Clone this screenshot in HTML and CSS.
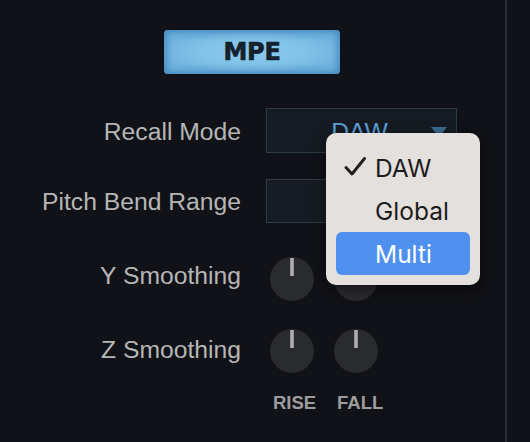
FILE: index.html
```html
<!DOCTYPE html>
<html>
<head>
<meta charset="utf-8">
<link rel="stylesheet" href="styles.css">
</head>
<body>
<div class="panel">
  <div class="content">
    <div class="mpe">MPE</div>
    <div class="row row-recall">
      <div class="label label-recall">Recall Mode</div>
      <div class="select select-recall">
        <span class="select-value">DAW</span>
        <span class="caret"></span>
      </div>
    </div>
    <div class="row row-pitch">
      <div class="label label-pitch">Pitch Bend Range</div>
      <div class="select select-pitch"></div>
    </div>
    <div class="row row-y">
      <div class="label label-y">Y Smoothing</div>
      <div class="knobs"><div class="knob"></div><div class="knob"></div></div>
    </div>
    <div class="row row-z">
      <div class="label label-z">Z Smoothing</div>
      <div class="knobs"><div class="knob"></div><div class="knob"></div></div>
    </div>
    <div class="knob-labels"><span>RISE</span><span>FALL</span></div>
  </div>
  <div class="divider"></div>
  <div class="menu">
    <div class="menu-item">
      <svg class="check" width="24" height="20" viewBox="0 0 24 20"><polyline points="2,10.5 8,17 20.5,1.5" fill="none" stroke="#1e1e1e" stroke-width="2.9" stroke-linecap="round" stroke-linejoin="round"/></svg>
      <span>DAW</span>
    </div>
    <div class="menu-item"><span>Global</span></div>
    <div class="menu-item menu-item-active"><span>Multi</span></div>
  </div>
</div>
</body>
</html>
```

FILE: styles.css
```css
html, body {
  margin: 0;
  padding: 0;
}
body {
  background: #111217;
  width: 530px;
  height: 442px;
  overflow: hidden;
  font-family: "Liberation Sans", Arial, sans-serif;
}
.panel {
  position: relative;
  display: flex;
  height: 442px;
}
.content {
  width: 505px;
  padding-top: 30px;
  box-sizing: border-box;
}
.divider {
  width: 2px;
  height: 442px;
  background: #2a2c33;
}
.mpe {
  margin-left: 164px;
  width: 176px;
  height: 44px;
  border-radius: 4px;
  background: radial-gradient(ellipse farthest-side at 50% 50%, #8ccaec 0%, #82c2e8 60%, #73b5e0 100%);
  box-shadow: inset 0 0 9px 2px #3f86bb;
  display: flex;
  align-items: center;
  justify-content: center;
  font-family: "DejaVu Sans", sans-serif;
  font-weight: bold;
  font-size: 24px;
  letter-spacing: -0.3px;
  color: #13222c;
  -webkit-text-stroke: 0.6px #13222c;
}
.row {
  display: grid;
  grid-template-columns: 241px auto;
  column-gap: 25px;
  align-items: center;
}
.row-recall { margin-top: 34px; height: 45px; }
.row-pitch { margin-top: 26px; height: 44px; }
.row-y { margin-top: 34px; height: 44px; }
.row-z { margin-top: 28px; height: 44px; }
.label {
  text-align: right;
  font-size: 24.7px;
  line-height: 25px;
  color: #b6b6b6;
  white-space: nowrap;
}
.label-recall { padding-top: 2px; }
.label-pitch { padding-top: 1px; }
.label-y { padding-bottom: 7px; }
.label-z { padding-bottom: 3px; }
.select {
  width: 191px;
  box-sizing: border-box;
  border: 1px solid #2c3b47;
  background: #161b23;
  display: grid;
  align-items: center;
}
.select-recall { height: 45px; }
.select-pitch { height: 44px; }
.select > * {
  grid-area: 1 / 1;
}
.select-value {
  justify-self: center;
  margin-right: 4px;
  font-size: 24.7px;
  line-height: 25px;
  padding-top: 1px;
  color: #5b9fd6;
}
.caret {
  justify-self: end;
  margin-right: 9px;
  margin-top: 3px;
  width: 0;
  height: 0;
  border-left: 8px solid transparent;
  border-right: 8px solid transparent;
  border-top: 10px solid #3d6b92;
}
.knobs {
  display: flex;
  gap: 20px;
  padding-left: 4px;
}
.knob {
  position: relative;
  width: 44px;
  height: 44px;
  border-radius: 50%;
  background: #2a2b2f;
}
.knob::before {
  content: "";
  position: absolute;
  left: 20px;
  top: 1px;
  width: 4px;
  height: 18px;
  background: linear-gradient(90deg, #8a8a8a, #b0b0b0 40%, #b0b0b0 60%, #8a8a8a);
}
.knob-labels {
  margin-top: 20px;
  margin-left: 270px;
  display: flex;
  gap: 20px;
}
.knob-labels span {
  width: 44px;
  padding-left: 3px;
  box-sizing: border-box;
  text-align: center;
  font-weight: bold;
  font-size: 18.5px;
  line-height: 19px;
  color: #9d9d9d;
  white-space: nowrap;
}
.menu {
  position: absolute;
  left: 326px;
  top: 133px;
  width: 154px;
  height: 152px;
  box-sizing: border-box;
  padding: 13px 10px 10px;
  border-radius: 10px;
  background: #e4e0dd;
  box-shadow: 0 4px 14px rgba(0, 0, 0, 0.55);
  display: flex;
  flex-direction: column;
  font-family: "Inter", "Liberation Sans", sans-serif;
}
.menu-item {
  position: relative;
  height: 43px;
  display: flex;
  align-items: center;
  padding-left: 39px;
  border-radius: 6px;
  font-size: 24.5px;
  color: #1c1c1c;
}
.menu-item-active {
  background: #4f90ee;
  color: #ffffff;
}
.check {
  position: absolute;
  left: 8px;
  top: 11px;
}
```
